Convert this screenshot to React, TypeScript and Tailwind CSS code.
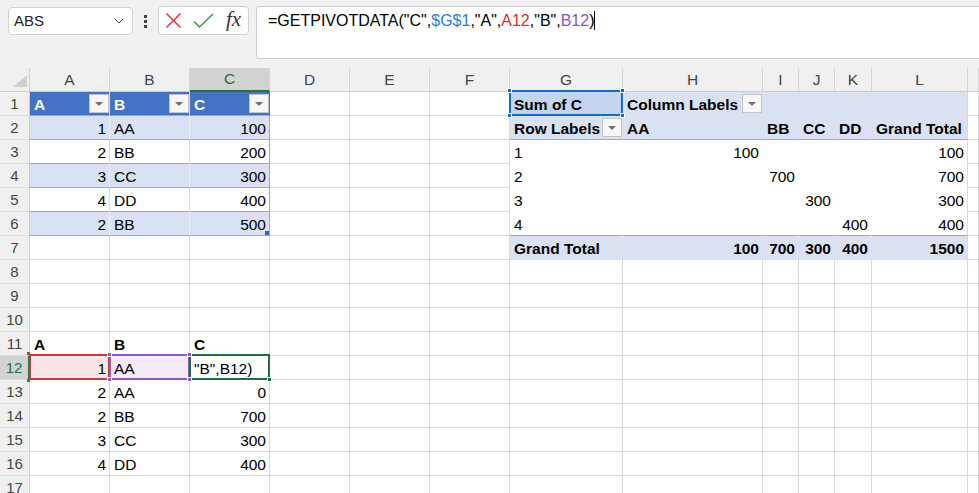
import React from 'react'
import { twMerge } from 'tailwind-merge'
import { ChevronDown } from 'lucide-react'

const cols = 'grid grid-cols-[30px_80px_80px_80px_80px_80px_80px_113px_140px_36px_36px_37px_96px_1fr]'

type Spec = { t?: React.ReactNode; right?: boolean; bold?: boolean; cls?: string; over?: React.ReactNode; drop?: boolean }

// table / pivot fills
const BAND = 'bg-[#d9e1f2] border-r-[#eaeff8] border-b-[#8ea9db]'
const WHITE = 'border-b-[#8ea9db]'
const PV = 'bg-[#d9e1f2] border-r-[#d9e1f2] border-b-[#d9e1f2]'
const PVL = 'bg-[#d9e1f2] border-b-[#8ea9db] border-r-[#d9e1f2]'
const PW = 'border-r-white border-b-white'
const PWL = 'border-r-white border-b-[#8ea9db]'
const HEAD = 'bg-[#4472c4] text-white font-bold border-r-[#c9d5ee] border-b-[#8ea9db] pr-0'

function Drop() {
  return (
    <span className="ml-auto w-5 h-[19px] shrink-0 bg-[#f6f6f6] border border-[#c4c4c4] flex items-center justify-center">
      <span className="w-0 h-0 border-l-4 border-r-4 border-t-4 border-l-transparent border-r-transparent border-t-[#707070]" />
    </span>
  )
}

function Handle({ pos, color }: { pos: string; color: string }) {
  return <span className={twMerge('absolute w-[5px] h-[5px] border border-white z-20', pos, color)} />
}

function Sel({ border, handle, all }: { border: string; handle: string; all?: boolean }) {
  return (
    <>
      <span className={twMerge('absolute -top-[2px] -left-px -right-px -bottom-px border-2 z-10 pointer-events-none', border)} />
      {all && <Handle pos="-top-[4px] -left-[3px]" color={handle} />}
      {all && <Handle pos="-top-[4px] -right-[3px]" color={handle} />}
      {all && <Handle pos="-bottom-[3px] -left-[3px]" color={handle} />}
      <Handle pos="-bottom-[3px] -right-[3px]" color={handle} />
    </>
  )
}

function Cell({ t, right, bold, cls, over, drop }: Spec) {
  return (
    <div
      className={twMerge(
        'relative h-6 flex items-center pl-1 pr-1 whitespace-nowrap text-[15.5px] text-black bg-white border-r border-b border-r-[#dadada] border-b-[#dadada]',
        right && 'justify-end pr-[3px]',
        bold && 'font-bold',
        drop && 'pr-0',
        cls,
      )}
    >
      {t !== undefined && <span className="leading-none pt-[2px]">{t}</span>}
      {drop && <Drop />}
      {over}
    </div>
  )
}

function RowHead({ n }: { n: number }) {
  const active = n === 12
  return (
    <div
      className={twMerge(
        'h-6 flex items-center justify-center text-[15px] text-[#444] bg-[#f0f0f0] border-r border-b border-r-[#cdcdcd] border-b-[#dcdcdc]',
        active && 'bg-[#d2d2d2] text-[#1e6e42] border-r-2 border-r-[#217346]',
      )}
    >
      <span className="pt-[2px]">{n}</span>
    </div>
  )
}

function Row({ n, cells }: { n: number; cells: Spec[] }) {
  return (
    <div className={cols}>
      <RowHead n={n} />
      {Array.from({ length: 13 }).map((_, i) => (
        <Cell key={i} {...(cells[i] ?? {})} />
      ))}
    </div>
  )
}

const blank = (k: number): Spec[] => Array.from({ length: k }).map(() => ({}))

const pivotBody = (label: string, col: number, val: string, last?: boolean): Spec[] => {
  const c = last ? PWL : PW
  const out: Spec[] = [{ t: label, cls: c }]
  for (let i = 1; i <= 4; i++) out.push(i === col ? { t: val, right: true, cls: c } : { cls: c })
  out.push({ t: val, right: true, cls: twMerge(c, 'border-r-[#dadada]') })
  return out
}

const rows: { n: number; cells: Spec[] }[] = [
  {
    n: 1,
    cells: [
      { t: 'A', drop: true, cls: HEAD },
      { t: 'B', drop: true, cls: HEAD },
      { t: 'C', drop: true, cls: twMerge(HEAD, 'border-r-[#4472c4]') },
      ...blank(3),
      {
        t: 'Sum of C',
        bold: true,
        cls: 'bg-[#c5d4ed] border-r-[#c5d4ed] border-b-[#d9e1f2]',
        over: <Sel all border="border-[#176bc0]" handle="bg-[#176bc0]" />,
      },
      { t: 'Column Labels', bold: true, drop: true, cls: PV },
      { cls: PV },
      { cls: PV },
      { cls: PV },
      { cls: twMerge(PV, 'border-r-[#dadada]') },
    ],
  },
  {
    n: 2,
    cells: [
      { t: '1', right: true, cls: BAND },
      { t: 'AA', cls: BAND },
      { t: '100', right: true, cls: twMerge(BAND, 'border-r-[#8ea9db]') },
      ...blank(3),
      { t: 'Row Labels', bold: true, drop: true, cls: PVL },
      { t: 'AA', bold: true, cls: PVL },
      { t: 'BB', bold: true, cls: PVL },
      { t: 'CC', bold: true, cls: PVL },
      { t: 'DD', bold: true, cls: PVL },
      { t: 'Grand Total', bold: true, cls: twMerge(PVL, 'border-r-[#dadada]') },
    ],
  },
  {
    n: 3,
    cells: [
      { t: '2', right: true, cls: WHITE },
      { t: 'BB', cls: WHITE },
      { t: '200', right: true, cls: twMerge(WHITE, 'border-r-[#8ea9db]') },
      ...blank(3),
      ...pivotBody('1', 1, '100'),
    ],
  },
  {
    n: 4,
    cells: [
      { t: '3', right: true, cls: BAND },
      { t: 'CC', cls: BAND },
      { t: '300', right: true, cls: twMerge(BAND, 'border-r-[#8ea9db]') },
      ...blank(3),
      ...pivotBody('2', 2, '700'),
    ],
  },
  {
    n: 5,
    cells: [
      { t: '4', right: true, cls: WHITE },
      { t: 'DD', cls: WHITE },
      { t: '400', right: true, cls: twMerge(WHITE, 'border-r-[#8ea9db]') },
      ...blank(3),
      ...pivotBody('3', 3, '300'),
    ],
  },
  {
    n: 6,
    cells: [
      { t: '2', right: true, cls: BAND },
      { t: 'BB', cls: BAND },
      {
        t: '500',
        right: true,
        cls: twMerge(BAND, 'border-r-[#8ea9db]'),
        over: <span className="absolute right-0 bottom-0 w-[4px] h-[4px] bg-[#3f63b0]" />,
      },
      ...blank(3),
      ...pivotBody('4', 4, '400', true),
    ],
  },
  {
    n: 7,
    cells: [
      ...blank(6),
      { t: 'Grand Total', bold: true, cls: PV },
      { t: '100', bold: true, right: true, cls: PV },
      { t: '700', bold: true, right: true, cls: PV },
      { t: '300', bold: true, right: true, cls: PV },
      { t: '400', bold: true, right: true, cls: PV },
      { t: '1500', bold: true, right: true, cls: twMerge(PV, 'border-r-[#dadada]') },
    ],
  },
  { n: 8, cells: [] },
  { n: 9, cells: [] },
  { n: 10, cells: [] },
  {
    n: 11,
    cells: [
      { t: 'A', bold: true },
      { t: 'B', bold: true },
      { t: 'C', bold: true },
    ],
  },
  {
    n: 12,
    cells: [
      {
        t: '1',
        right: true,
        cls: 'bg-[#f8e5e5]',
        over: <Sel all border="border-[#c23b3b]" handle="bg-[#c23b3b] w-[3px] h-[3px] border-0" />,
      },
      {
        t: 'AA',
        cls: 'bg-[#f2ecf8]',
        over: <Sel all border="border-[#8b5cc0]" handle="bg-[#8b5cc0]" />,
      },
      {
        t: '"B",B12)',
        cls: 'justify-start',
        over: <Sel border="border-[#1e6e42]" handle="bg-[#1e6e42]" />,
      },
    ],
  },
  {
    n: 13,
    cells: [
      { t: '2', right: true },
      { t: 'AA' },
      { t: '0', right: true },
    ],
  },
  {
    n: 14,
    cells: [
      { t: '2', right: true },
      { t: 'BB' },
      { t: '700', right: true },
    ],
  },
  {
    n: 15,
    cells: [
      { t: '3', right: true },
      { t: 'CC' },
      { t: '300', right: true },
    ],
  },
  {
    n: 16,
    cells: [
      { t: '4', right: true },
      { t: 'DD' },
      { t: '400', right: true },
    ],
  },
  { n: 17, cells: [] },
]

const letters = ['A', 'B', 'C', 'D', 'E', 'F', 'G', 'H', 'I', 'J', 'K', 'L', '']

export default function App() {
  return (
    <div className="w-[979px] h-[493px] overflow-hidden bg-white font-['Liberation_Sans',Arial,sans-serif]">
      {/* name box + formula bar */}
      <div className="h-[68px] bg-[#f1f1f1] flex items-start">
        <div className="ml-2 mt-[7px] w-[125px] h-7 bg-white border border-[#d2d2d2] rounded-[4px] flex items-center pl-[5px] pr-[5px] text-[15px] text-[#222]">
          ABS
          <ChevronDown className="ml-auto w-4 h-4 text-[#444]" strokeWidth={1.5} />
        </div>
        <div className="ml-[11px] mt-[15px] flex flex-col gap-[2px]">
          <span className="w-[3px] h-[3px] bg-[#444]" />
          <span className="w-[3px] h-[3px] bg-[#444]" />
          <span className="w-[3px] h-[3px] bg-[#444]" />
        </div>
        <div className="ml-[11px] mt-[6px] w-[91px] h-[29px] bg-white border border-[#d2d2d2] rounded-[4px] flex items-center pl-[6px]">
          <svg width="17" height="17" viewBox="0 0 17 17" className="shrink-0">
            <path d="M1.5 1.5 L15.5 15.5 M15.5 1.5 L1.5 15.5" stroke="#e2393c" strokeWidth="1.6" fill="none" />
          </svg>
          <svg width="21" height="16" viewBox="0 0 21 16" className="ml-[11px] shrink-0">
            <path d="M1 8.5 L6.5 14 L20 1" stroke="#3d9a50" strokeWidth="1.6" fill="none" />
          </svg>
          <span className="ml-[12px] font-['Liberation_Serif',serif] italic text-[21px] leading-none text-[#333] -mt-[3px]">fx</span>
        </div>
        <div className="ml-[7px] mt-[6px] h-[53px] flex-1 bg-white border border-r-0 border-[#cfcfcf] rounded-l-[4px] pl-[11px] pt-[4px] text-[16px] leading-5 text-black whitespace-nowrap">
          =GETPIVOTDATA("C",<span className="text-[#2a7bd0]">$G$1</span>,"A",<span className="text-[#d9302c]">A12</span>,"B",
          <span className="text-[#8a55c0]">B12</span>)
          <span className="inline-block w-px h-[19px] bg-black align-middle -mt-[2px]" />
        </div>
      </div>

      {/* column headers */}
      <div className={cols}>
        <div className="h-6 bg-[#f0f0f0] border-r border-b border-r-[#cdcdcd] border-b-[#cdcdcd] relative">
          <svg width="30" height="24" className="absolute inset-0">
            <polygon points="27,7 27,19 13,19" fill="#d0d0d0" />
          </svg>
        </div>
        {letters.map((l) => (
          <div
            key={l || 'x'}
            className={twMerge(
              'h-6 flex items-center justify-center text-[15.5px] text-[#444] bg-[#f0f0f0] border-r border-b border-r-[#d6d6d6] border-b-[#cdcdcd]',
              l === 'C' && 'bg-[#d2d2d2] text-[#1e6e42] border-b-2 border-b-[#217346]',
            )}
          >
            {l}
          </div>
        ))}
      </div>

      {rows.map((r) => (
        <Row key={r.n} n={r.n} cells={r.cells} />
      ))}
    </div>
  )
}
